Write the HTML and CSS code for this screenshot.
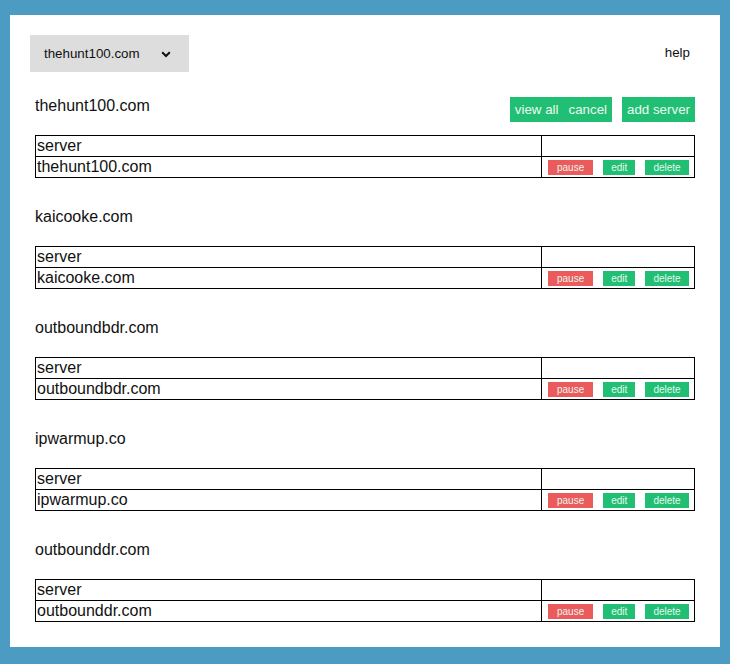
FILE: index.html
```html
<!DOCTYPE html>
<html>
<head>
<meta charset="utf-8">
<link rel="stylesheet" href="styles.css">
</head>
<body>
<div class="panel">
  <div class="topbar">
    <div class="select">
      <span>thehunt100.com</span>
      <svg class="chev" width="10" height="7" viewBox="0 0 10 7"><path d="M1.2 1.2 L5 5 L8.8 1.2" fill="none" stroke="#111" stroke-width="2"/></svg>
    </div>
    <span class="help">help</span>
  </div>

  <div class="section">
    <div class="head">
      <span class="title">thehunt100.com</span>
      <div class="actions">
        <span class="btn">view all</span><span class="btn">cancel</span>
        <span class="btn gap">add server</span>
      </div>
    </div>
    <table class="tbl">
      <tr><td class="c1">server</td><td></td></tr>
      <tr><td class="c1">thehunt100.com</td><td><div class="ops"><span class="sb red">pause</span><span class="sb">edit</span><span class="sb">delete</span></div></td></tr>
    </table>
  </div>

  <div class="section">
    <div class="head"><span class="title">kaicooke.com</span></div>
    <table class="tbl">
      <tr><td class="c1">server</td><td></td></tr>
      <tr><td class="c1">kaicooke.com</td><td><div class="ops"><span class="sb red">pause</span><span class="sb">edit</span><span class="sb">delete</span></div></td></tr>
    </table>
  </div>

  <div class="section">
    <div class="head"><span class="title">outboundbdr.com</span></div>
    <table class="tbl">
      <tr><td class="c1">server</td><td></td></tr>
      <tr><td class="c1">outboundbdr.com</td><td><div class="ops"><span class="sb red">pause</span><span class="sb">edit</span><span class="sb">delete</span></div></td></tr>
    </table>
  </div>

  <div class="section">
    <div class="head"><span class="title">ipwarmup.co</span></div>
    <table class="tbl">
      <tr><td class="c1">server</td><td></td></tr>
      <tr><td class="c1">ipwarmup.co</td><td><div class="ops"><span class="sb red">pause</span><span class="sb">edit</span><span class="sb">delete</span></div></td></tr>
    </table>
  </div>

  <div class="section">
    <div class="head"><span class="title">outbounddr.com</span></div>
    <table class="tbl">
      <tr><td class="c1">server</td><td></td></tr>
      <tr><td class="c1">outbounddr.com</td><td><div class="ops"><span class="sb red">pause</span><span class="sb">edit</span><span class="sb">delete</span></div></td></tr>
    </table>
  </div>
</div>
</body>
</html>
```

FILE: styles.css
```css
html, body {
  margin: 0;
  padding: 0;
}
body {
  background: #4b9bc3;
  font-family: "Liberation Sans", Arial, sans-serif;
  color: #111;
  padding: 15px 10px 17px 10px;
}
.panel {
  background: #fff;
  padding: 20px 25px 25px 25px;
  min-height: 587px;
  box-sizing: border-box;
}
.topbar {
  display: flex;
  justify-content: space-between;
  align-items: center;
  margin-left: -5px;
  margin-right: 5px;
  margin-bottom: 24px;
}
.select {
  width: 159px;
  height: 37px;
  box-sizing: border-box;
  background: #dddddd;
  display: flex;
  align-items: center;
  padding-left: 14px;
  font-size: 13.333px;
}
.select .chev {
  margin-left: 21px;
  margin-top: 1px;
}
.help {
  font-size: 13.333px;
  margin-top: -2px;
}
.section {
  margin-bottom: 29px;
}
.section:last-child {
  margin-bottom: 0;
}
.head {
  display: flex;
  justify-content: space-between;
  align-items: flex-start;
  height: 26px;
  margin-bottom: 13px;
}
.title {
  font-size: 16px;
  line-height: 18px;
  padding-top: 1px;
}
.actions {
  display: flex;
  margin-top: 1px;
}
.btn {
  background: #21bf73;
  color: #eef8f2;
  font-size: 13.333px;
  line-height: 15px;
  padding: 5px;
}
.btn.gap {
  margin-left: 10px;
}
.tbl {
  width: 100%;
  border-collapse: collapse;
}
.tbl td {
  border: 1px solid #000;
  padding: 1px;
  font-size: 16px;
  line-height: 18px;
  height: 18px;
}
.tbl td.c1 {
  width: 503px;
}
.ops {
  display: flex;
  gap: 10px;
  padding-left: 5px;
  align-items: center;
}
.sb {
  background: #21bf73;
  color: #e6f7ee;
  font-size: 10px;
  line-height: 15px;
  height: 15px;
  padding: 0 8px;
}
.sb.red {
  background: #ec5b5b;
  padding: 0 9px;
}
```
